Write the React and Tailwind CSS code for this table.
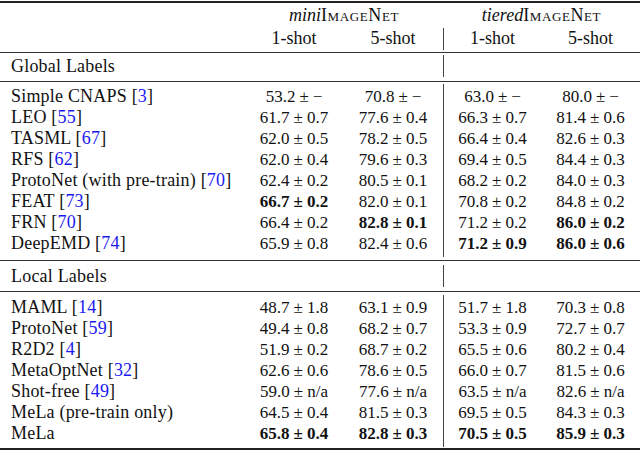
const GLOBAL = [
  ["Simple CNAPS", "3", ["53.2", "−"], ["70.8", "−"], ["63.0", "−"], ["80.0", "−"], []],
  ["LEO", "55", ["61.7", "0.7"], ["77.6", "0.4"], ["66.3", "0.7"], ["81.4", "0.6"], []],
  ["TASML", "67", ["62.0", "0.5"], ["78.2", "0.5"], ["66.4", "0.4"], ["82.6", "0.3"], []],
  ["RFS", "62", ["62.0", "0.4"], ["79.6", "0.3"], ["69.4", "0.5"], ["84.4", "0.3"], []],
  ["ProtoNet (with pre-train)", "70", ["62.4", "0.2"], ["80.5", "0.1"], ["68.2", "0.2"], ["84.0", "0.3"], []],
  ["FEAT", "73", ["66.7", "0.2"], ["82.0", "0.1"], ["70.8", "0.2"], ["84.8", "0.2"], [0]],
  ["FRN", "70", ["66.4", "0.2"], ["82.8", "0.1"], ["71.2", "0.2"], ["86.0", "0.2"], [1, 3]],
  ["DeepEMD", "74", ["65.9", "0.8"], ["82.4", "0.6"], ["71.2", "0.9"], ["86.0", "0.6"], [2, 3]],
];

const LOCAL = [
  ["MAML", "14", ["48.7", "1.8"], ["63.1", "0.9"], ["51.7", "1.8"], ["70.3", "0.8"], []],
  ["ProtoNet", "59", ["49.4", "0.8"], ["68.2", "0.7"], ["53.3", "0.9"], ["72.7", "0.7"], []],
  ["R2D2", "4", ["51.9", "0.2"], ["68.7", "0.2"], ["65.5", "0.6"], ["80.2", "0.4"], []],
  ["MetaOptNet", "32", ["62.6", "0.6"], ["78.6", "0.5"], ["66.0", "0.7"], ["81.5", "0.6"], []],
  ["Shot-free", "49", ["59.0", "n/a"], ["77.6", "n/a"], ["63.5", "n/a"], ["82.6", "n/a"], []],
  ["MeLa (pre-train only)", null, ["64.5", "0.4"], ["81.5", "0.3"], ["69.5", "0.5"], ["84.3", "0.3"], []],
  ["MeLa", null, ["65.8", "0.4"], ["82.8", "0.3"], ["70.5", "0.5"], ["85.9", "0.3"], [0, 1, 2, 3]],
];

function Val({ v, bold }) {
  return (
    <span className={bold ? "font-bold" : ""}>
      {v[0]}
      <span className="mx-[4px]">±</span>
      {v[1]}
    </span>
  );
}

function ImageNet() {
  return (
    <span className="tracking-[0.6px]">
      I<span className="[font-variant:small-caps]">mage</span>N<span className="[font-variant:small-caps]">et</span>
    </span>
  );
}

function Block({ rows, className }) {
  return (
    <div className={"flex " + className}>
      <div className="w-[443px] pt-[2px] pb-[3px]">
        {rows.map((r) => (
          <div key={r[0]} className="flex h-[21px] leading-[21px]">
            <div className="w-[245px] pl-[11px] whitespace-nowrap text-[18px] tracking-[0.2px]">
              {r[0]}
              {r[1] && (
                <>
                  {" "}[<span className="text-[#1a1af0]">{r[1]}</span>]
                </>
              )}
            </div>
            <div className="w-[98px] text-center whitespace-nowrap">
              <Val v={r[2]} bold={r[6].includes(0)} />
            </div>
            <div className="w-[100px] text-center whitespace-nowrap">
              <Val v={r[3]} bold={r[6].includes(1)} />
            </div>
          </div>
        ))}
      </div>
      <div className="w-[197px] border-l border-[#444] pt-[2px] pb-[3px]">
        {rows.map((r) => (
          <div key={r[0]} className="flex h-[21px] leading-[21px]">
            <div className="w-[97px] text-center whitespace-nowrap">
              <Val v={r[4]} bold={r[6].includes(2)} />
            </div>
            <div className="w-[99px] text-center whitespace-nowrap">
              <Val v={r[5]} bold={r[6].includes(3)} />
            </div>
          </div>
        ))}
      </div>
    </div>
  );
}

function Section({ label, className }) {
  return (
    <div className={"flex h-[22px] " + className}>
      <div className="w-[443px] pl-[11px] pt-[1px] leading-[21px] text-[18px] tracking-[0.2px]">{label}</div>
      <div className="w-[197px] border-l border-[#444]" />
    </div>
  );
}

export default function App() {
  return (
    <div className="w-[640px] h-[452px] bg-white text-[#111] font-['Liberation_Serif',serif] text-[17px] overflow-hidden">
      <div className="mt-[1px] h-[2px] bg-[#222]" />

      <div className="flex mt-[2px] h-[21px] leading-[21px] text-[18px]">
        <div className="w-[245px]" />
        <div className="w-[198px] text-center">
          <i>mini</i>
          <ImageNet />
        </div>
        <div className="w-[197px] text-center">
          <i>tiered</i>
          <ImageNet />
        </div>
      </div>

      <div className="flex mt-[2px] h-[22px] leading-[21px] text-[18px]">
        <div className="w-[245px]" />
        <div className="w-[98px] text-center">1-shot</div>
        <div className="w-[100px] text-center">5-shot</div>
        <div className="flex w-[197px] border-l border-[#444]">
          <div className="w-[97px] text-center">1-shot</div>
          <div className="w-[99px] text-center">5-shot</div>
        </div>
      </div>

      <div className="mt-[2px] h-px bg-[#333]" />
      <Section label="Global Labels" className="mt-[2px]" />
      <div className="mt-[4px] h-px bg-[#333]" />
      <Block rows={GLOBAL} className="mt-[2px]" />
      <div className="mt-[3px] h-px bg-[#333]" />
      <Section label="Local Labels" className="mt-[4px]" />
      <div className="mt-[4px] h-px bg-[#333]" />
      <Block rows={LOCAL} className="mt-[3px]" />
      <div className="mt-[1px] h-[2px] bg-[#222]" />
    </div>
  );
}
